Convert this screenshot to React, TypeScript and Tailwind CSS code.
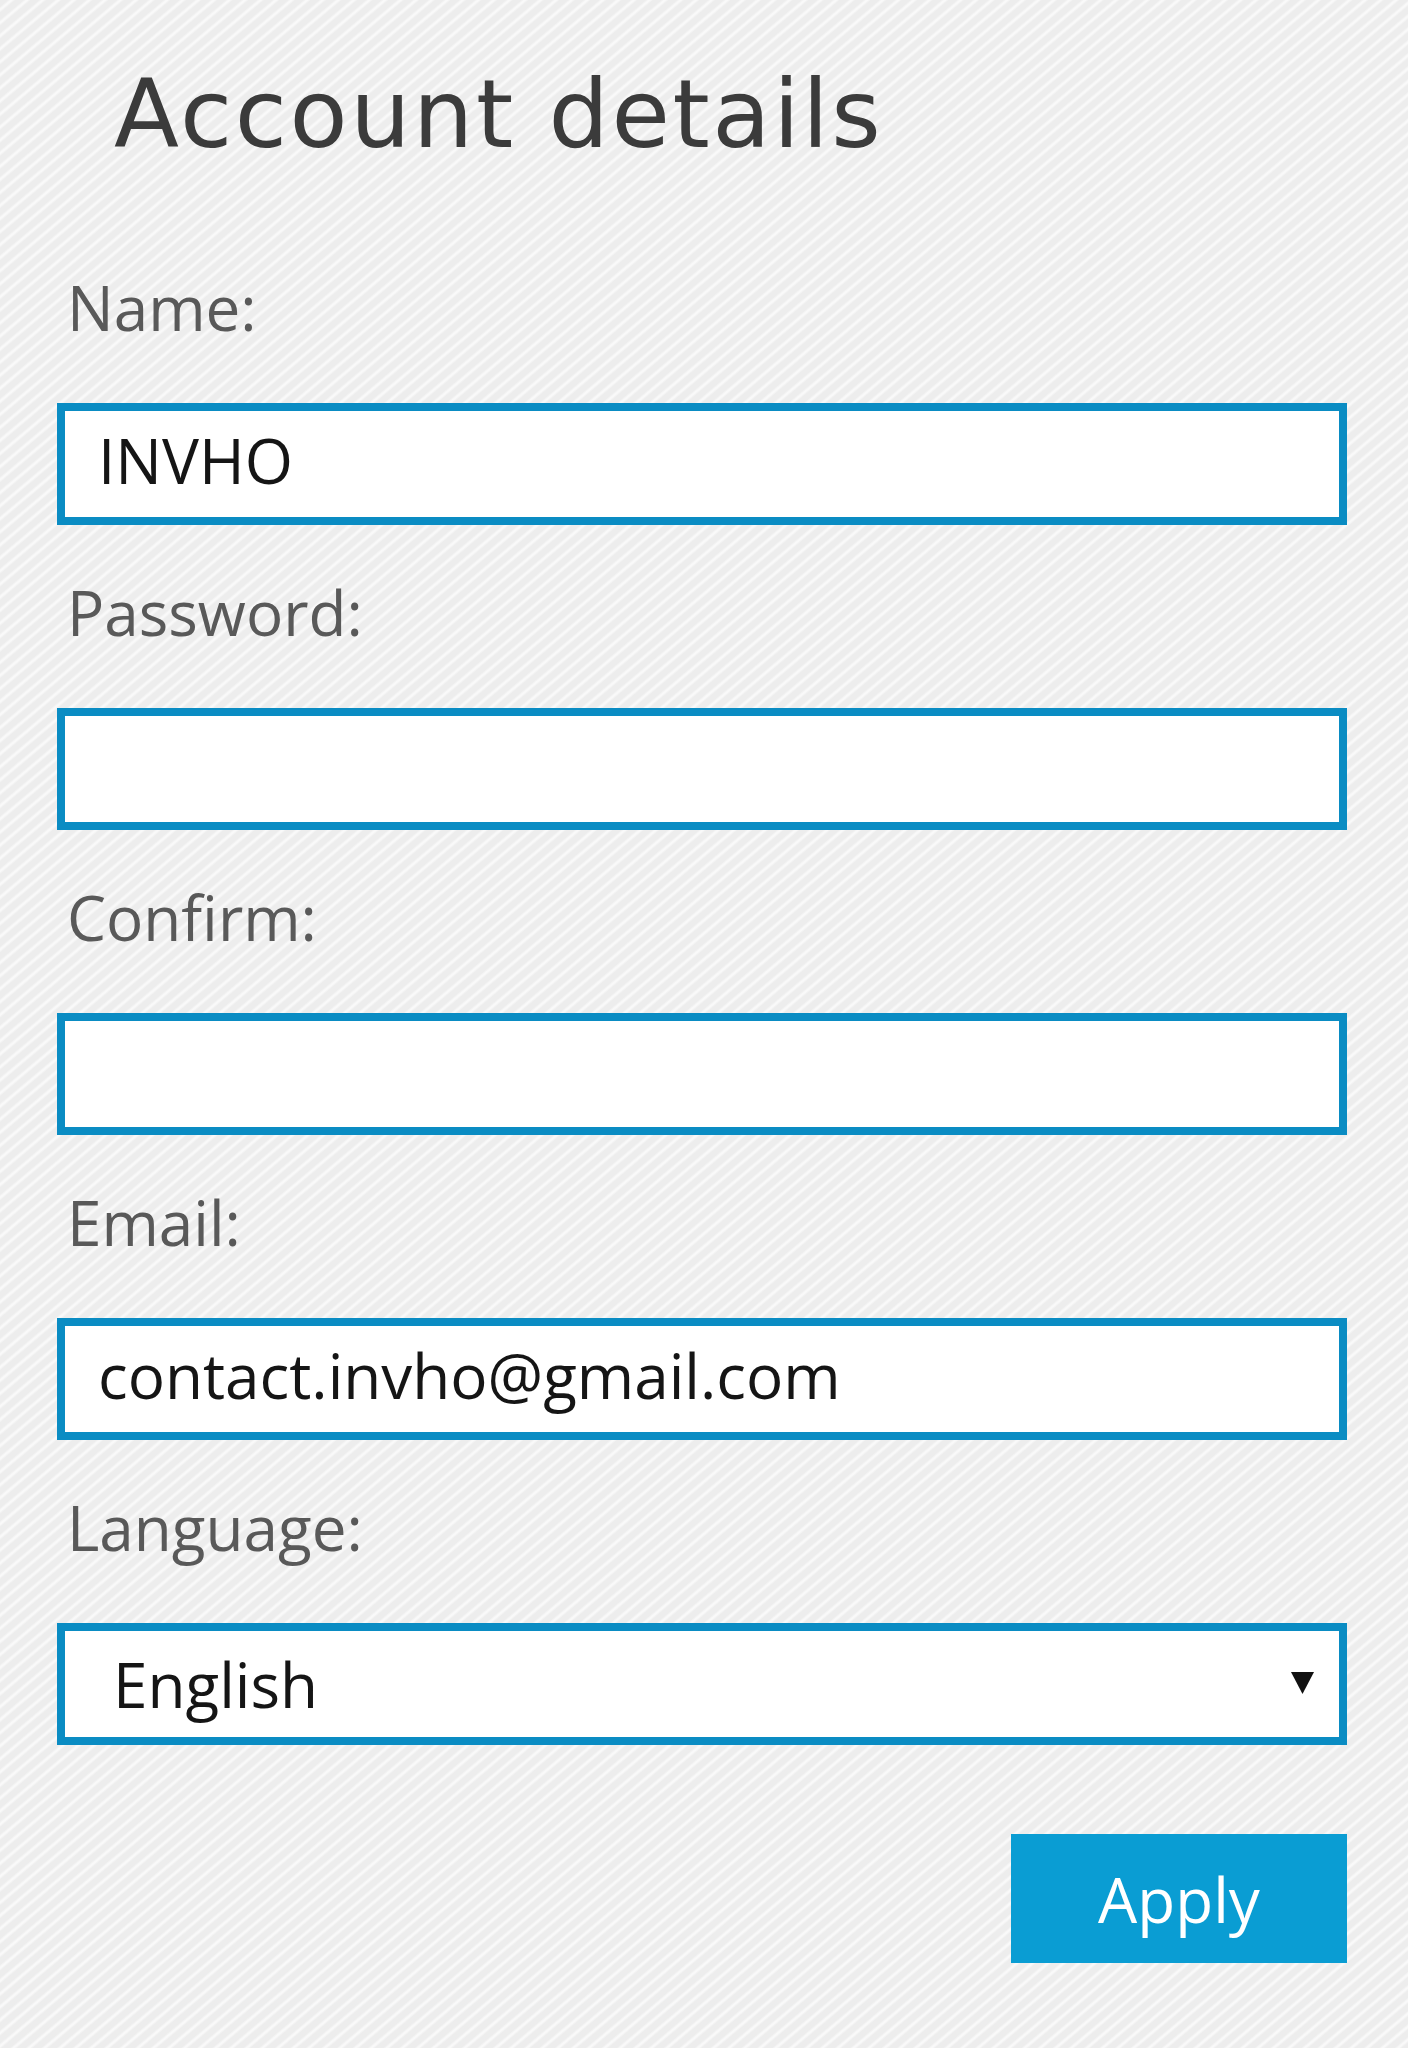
import React from "react";

const labelCls =
  "block h-[84px] leading-[78px] pl-[10px] text-[62px] text-[#595959] font-['Open_Sans',sans-serif]";
const boxCls =
  "flex items-center h-[122px] w-[1290px] border-[8px] border-[#0a8cc3] bg-white";

function Field({ label, value, mt }: { label: string; value?: string; mt: string }) {
  return (
    <div className={mt}>
      <label className={labelCls}>{label}</label>
      <div className={`${boxCls} mt-[51px] pl-[33px] pb-[8px]`}>
        <span className="text-[62px] leading-[84px] text-[#151515] font-['Open_Sans',sans-serif]">
          {value ?? ""}
        </span>
      </div>
    </div>
  );
}

export default function App() {
  return (
    <div className="flex w-[1413px] h-[2048px] bg-white">
      <div className="w-[1408px] h-[2048px] bg-[#efefef] bg-[image:repeating-linear-gradient(140deg,#ededed_0px,#ededed_5px,#f9f9f9_7px,#f9f9f9_8px,#ededed_10px)] pl-[57px] pt-[67px]">
        <h1 className="pl-[57px] h-[95px] text-[95px] leading-[95px] tracking-[2.6px] text-[#3b3b3b] font-['DejaVu_Sans',sans-serif] font-normal">
          Account details
        </h1>
        <Field label="Name:" value="INVHO" mt="mt-[106px]" />
        <Field label="Password:" mt="mt-[48px]" />
        <Field label="Confirm:" mt="mt-[48px]" />
        <Field label="Email:" value="contact.invho@gmail.com" mt="mt-[48px]" />
        <div className="mt-[48px]">
          <label className={labelCls}>Language:</label>
          <div className={`${boxCls} mt-[51px] pl-[48px] pr-[25px] justify-between`}>
            <span className="text-[62px] leading-[84px] text-[#151515] font-['Open_Sans',sans-serif]">
              English
            </span>
            <svg width="23" height="22" viewBox="0 0 23 22" className="mb-[2px]">
              <polygon points="0,0 23,0 11.5,22" fill="#111" />
            </svg>
          </div>
        </div>
        <div className="flex w-[1290px] justify-end mt-[89px]">
          <button className="w-[336px] h-[129px] bg-[#0a9dd3] text-white text-[62px] leading-[84px] font-['Open_Sans',sans-serif] flex items-center justify-center">
            Apply
          </button>
        </div>
      </div>
    </div>
  );
}
